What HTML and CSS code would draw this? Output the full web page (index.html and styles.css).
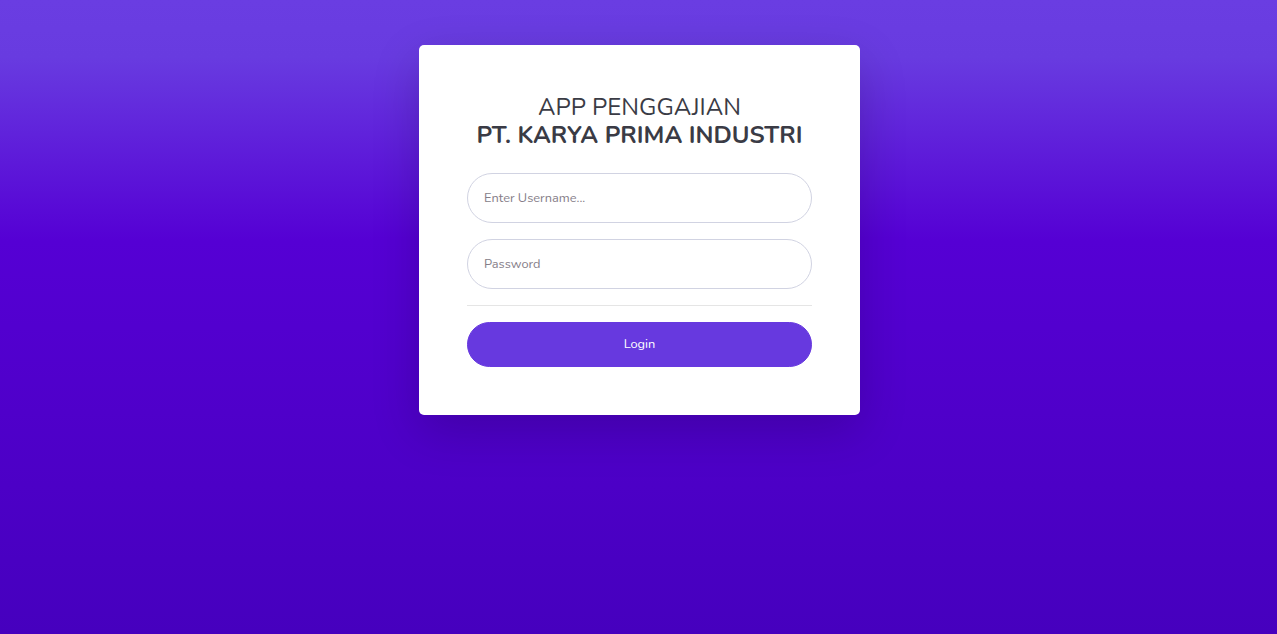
FILE: index.html
```html
<!DOCTYPE html>
<html lang="id">
<head>
<meta charset="utf-8">
<title>Login - App Penggajian</title>
<link rel="stylesheet" href="styles.css">
</head>
<body>
<main class="page">
  <div class="card">
    <div class="card-body">
      <h1 class="title">
        <span class="title-line">APP PENGGAJIAN</span>
        <strong class="title-line title-bold">PT. KARYA PRIMA INDUSTRI</strong>
      </h1>
      <form class="form">
        <div class="form-group">
          <input class="input" type="text" placeholder="Enter Username...">
        </div>
        <div class="form-group">
          <input class="input" type="password" placeholder="Password">
        </div>
        <hr class="divider">
        <button class="btn" type="button">Login</button>
      </form>
    </div>
  </div>
</main>
</body>
</html>
```
FILE: styles.css
```css
html, body {
  margin: 0;
  padding: 0;
  height: 100%;
}
body {
  font-family: "Nunito", "Lato", "Noto Sans", sans-serif;
  background: linear-gradient(180deg, #6a3de2 0%, #683be0 9%, #5500d4 38%, #4f00ca 65%, #4600be 100%);
  color: #3a3b45;
}
.page {
  display: flex;
  justify-content: center;
  padding: 45px 0 0 2px;
}
.card {
  width: 441px;
  background: #fff;
  border-radius: 5px;
  box-shadow: 0 1rem 3rem rgba(0, 0, 0, 0.175);
}
.card-body {
  padding: 48px;
}
.title {
  margin: 0 0 24px;
  text-align: center;
  font-size: 24px;
  line-height: 28px;
  font-weight: 400;
  color: #3a3b45;
}
.title-line {
  display: block;
}
.title-bold {
  font-weight: 700;
}
.form {
  display: flex;
  flex-direction: column;
}
.form-group {
  margin-bottom: 16px;
}
.input {
  box-sizing: border-box;
  display: block;
  width: 100%;
  height: 50px;
  padding: 0 16px;
  border: 1px solid #d1d3e2;
  border-radius: 10rem;
  font-family: inherit;
  font-size: 12.8px;
  color: #6e707e;
  background: #fff;
  outline: none;
}
.input::placeholder {
  color: #857d88;
  opacity: 1;
}
.divider {
  margin: 0 0 16px;
  border: 0;
  border-top: 1px solid rgba(0, 0, 0, 0.1);
}
.btn {
  display: block;
  width: 100%;
  height: 45px;
  padding: 0 16px 1px;
  border: 1px solid #6739df;
  border-radius: 10rem;
  background: #6739df;
  color: #fff;
  font-family: inherit;
  font-size: 12.8px;
  cursor: pointer;
}
```
